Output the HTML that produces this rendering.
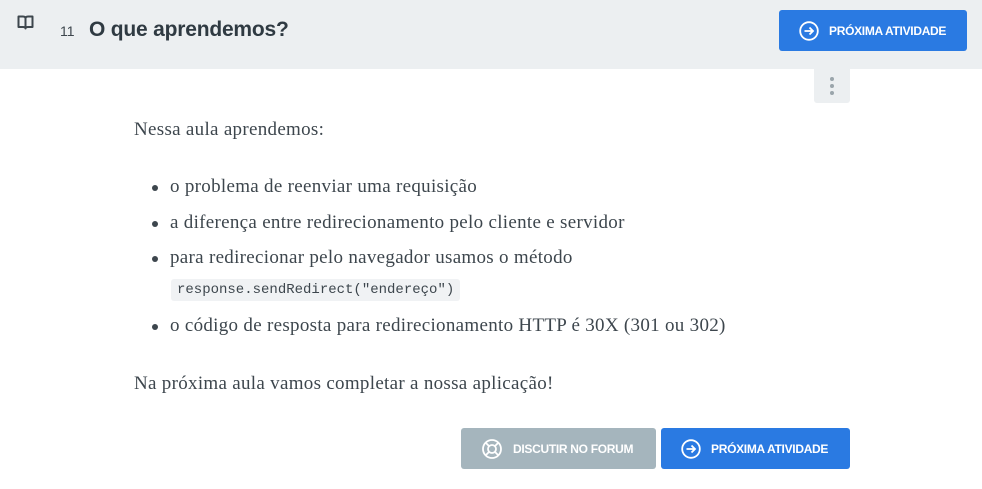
<!DOCTYPE html>
<html><head><meta charset="utf-8"><style>
*{margin:0;padding:0;box-sizing:border-box}
body{width:982px;height:489px;background:#fff;font-family:"Liberation Serif",serif;color:#3d464d;position:relative;overflow:hidden}
.hdr{position:absolute;left:0;top:0;width:982px;height:69px;background:#eceff1}
.num{position:absolute;left:60px;top:23px;font:14px "Liberation Sans",sans-serif;color:#3d464d}
.title{position:absolute;left:89px;top:18px;font:bold 21px "Liberation Sans",sans-serif;color:#2f3a42;letter-spacing:-0.2px}
.btn{position:absolute;height:41px;border-radius:3px;color:#fff;font:bold 12px "Liberation Sans",sans-serif;display:flex;align-items:center;letter-spacing:-0.3px}
.blue{background:#2a7ae2}.gray{background:#a5b5bd}
.btn svg{margin:0 10px 0 20px}
.dots{position:absolute;left:814px;top:69px;width:36px;height:34px;background:#eceff1;border-radius:0 0 3px 3px}
.dots i{position:absolute;left:16px;width:4px;height:4px;border-radius:50%;background:#9aa5ab}
.t{position:absolute;font-size:19px;letter-spacing:0.3px;white-space:nowrap}
.b{position:absolute;left:152px;width:6px;height:6px;border-radius:50%;background:#3d464d}
.code{position:absolute;left:171px;top:279px;height:22px;padding:0 6px;background:#f0f2f4;border-radius:3px;font:14px "Liberation Mono",monospace;line-height:22px;color:#3d464d}
</style></head><body>
<div class="hdr"></div>
<svg style="position:absolute;left:17px;top:15px" width="17" height="15" viewBox="0 0 17 15"><path d="M1.5 1.5h4.5q2.5 0 2.5 2v10q0-1.5-2.5-1.5H1.5z M15.5 1.5H11q-2.5 0-2.5 2v10q0-1.5 2.5-1.5h4.5z" fill="none" stroke="#3d464d" stroke-width="2" stroke-linejoin="round"/></svg>
<div class="num">11</div>
<div class="title">O que aprendemos?</div>
<div class="btn blue" style="left:779px;top:10px;width:188px"><svg width="20" height="20" viewBox="0 0 20 20"><circle cx="10" cy="10" r="8.8" fill="none" stroke="#fff" stroke-width="1.8"/><path d="M5.5 10h8.5M10.5 6.5 14 10l-3.5 3.5" fill="none" stroke="#fff" stroke-width="1.8"/></svg>PRÓXIMA ATIVIDADE</div>
<div class="dots"><i style="top:8px"></i><i style="top:15px"></i><i style="top:22px"></i></div>
<div class="t" style="left:134px;top:119px">Nessa aula aprendemos:</div>
<div class="b" style="top:185px"></div><div class="t" style="left:170px;top:176px">o problema de reenviar uma requisição</div>
<div class="b" style="top:221px"></div><div class="t" style="left:170px;top:212px">a diferença entre redirecionamento pelo cliente e servidor</div>
<div class="b" style="top:256px"></div><div class="t" style="left:170px;top:247px">para redirecionar pelo navegador usamos o método</div>
<div class="code">response.sendRedirect("endereço")</div>
<div class="b" style="top:324px"></div><div class="t" style="left:170px;top:315px">o código de resposta para redirecionamento HTTP é 30X (301 ou 302)</div>
<div class="t" style="left:134px;top:373px">Na próxima aula vamos completar a nossa aplicação!</div>
<div class="btn gray" style="left:461px;top:428px;width:195px"><svg width="22" height="22" viewBox="0 0 22 22" fill="none" stroke="#fff" stroke-width="1.8"><circle cx="11" cy="11" r="9"/><circle cx="11" cy="11" r="4"/><path d="M4.6 4.6 8.2 8.2M17.4 4.6 13.8 8.2M4.6 17.4 8.2 13.8M17.4 17.4 13.8 13.8"/></svg>DISCUTIR NO FORUM</div>
<div class="btn blue" style="left:661px;top:428px;width:189px"><svg width="20" height="20" viewBox="0 0 20 20"><circle cx="10" cy="10" r="8.8" fill="none" stroke="#fff" stroke-width="1.8"/><path d="M5.5 10h8.5M10.5 6.5 14 10l-3.5 3.5" fill="none" stroke="#fff" stroke-width="1.8"/></svg>PRÓXIMA ATIVIDADE</div>
</body></html>
